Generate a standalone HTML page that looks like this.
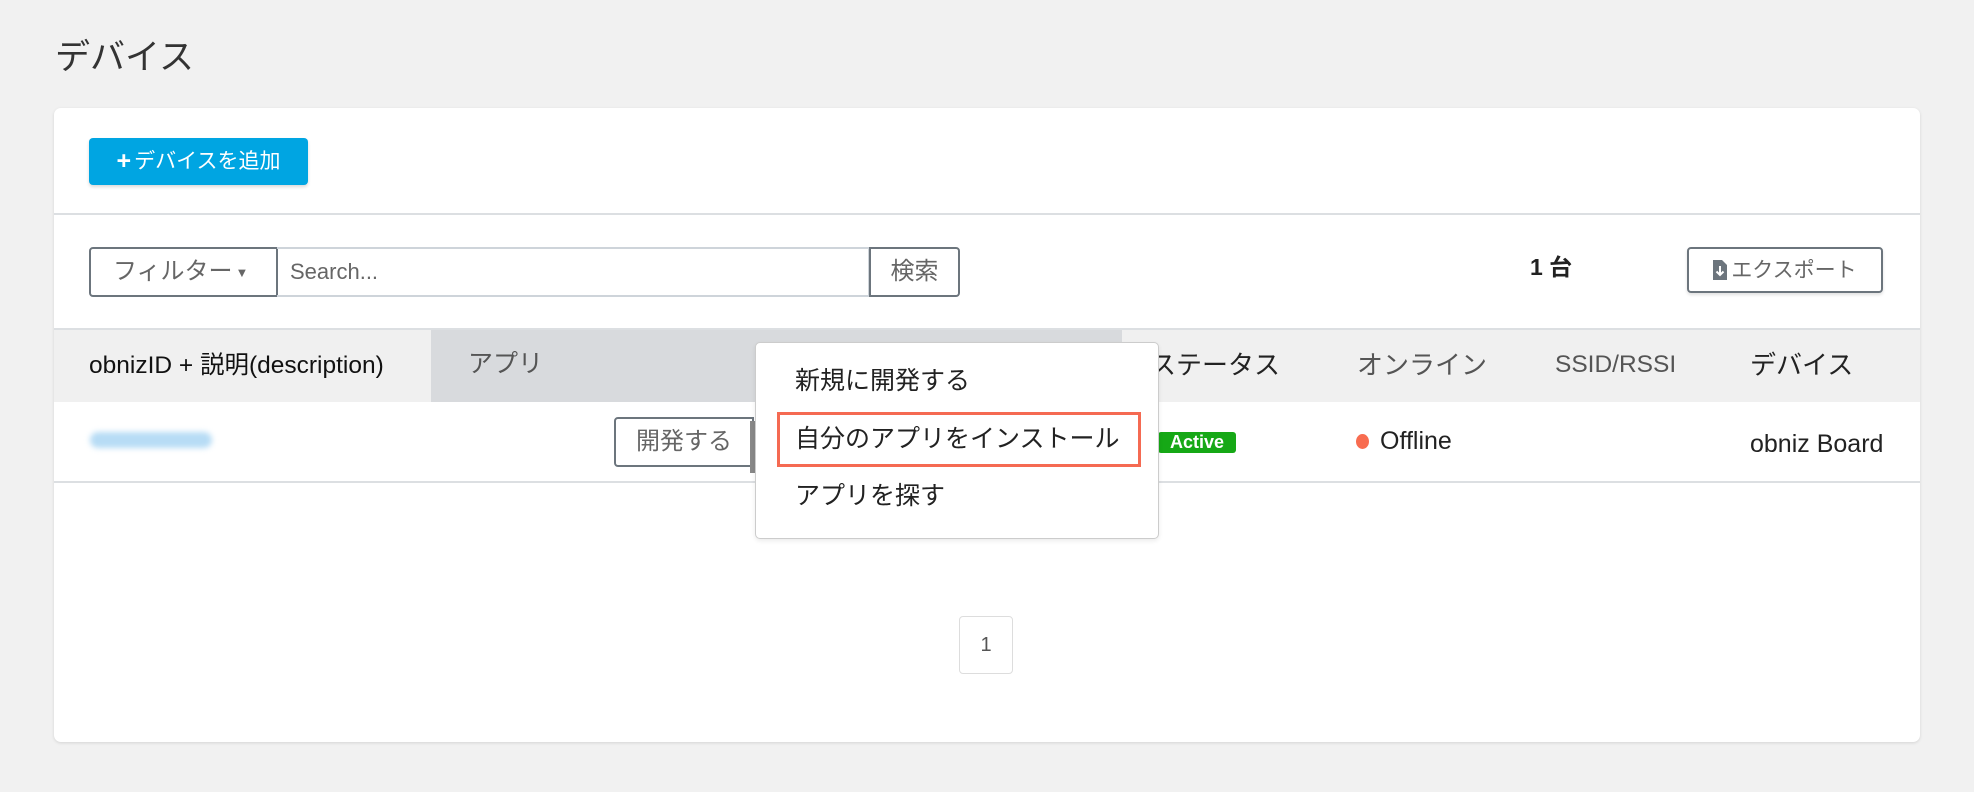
<!DOCTYPE html>
<html><head><meta charset="utf-8"><style>
*{box-sizing:border-box;margin:0;padding:0}
body{width:1974px;height:792px;background:#f1f1f1;font-family:"Liberation Sans","Noto Sans CJK JP",sans-serif;color:#222;position:relative;overflow:hidden}
.a{position:absolute}
.t{white-space:nowrap;line-height:1}
</style></head><body>
<div class="a t" style="left:55px;top:40px;font-size:35px;color:#333">デバイス</div>
<div class="a" style="left:54px;top:108px;width:1866px;height:634px;background:#fff;border-radius:7px;box-shadow:0 1px 3px rgba(0,0,0,.12)"></div>
<div class="a t" style="left:89px;top:138px;width:219px;height:47px;background:#00a5e2;border-radius:4px;color:#fff;font-size:21px;display:flex;align-items:center;justify-content:center;box-shadow:0 2px 3px rgba(0,0,0,.15)"><b style="font-size:25px;margin-right:3px">+</b>デバイスを追加</div>
<div class="a" style="left:54px;top:213px;width:1866px;height:2px;background:#dcdfe2"></div>
<div class="a t" style="left:89px;top:247px;width:189px;height:50px;border:2px solid #6c757d;border-radius:4px 0 0 4px;font-size:24px;color:#666;display:flex;align-items:center;padding-left:22px">フィルター<span style="font-size:13px;margin-left:3px">▼</span></div>
<div class="a t" style="left:277px;top:247px;width:593px;height:50px;border:2px solid #ced4da;border-left:none;font-size:22px;color:#666;display:flex;align-items:center;padding-left:13px">Search...</div>
<div class="a t" style="left:869px;top:247px;width:91px;height:50px;border:2px solid #6c757d;border-radius:0 4px 4px 0;font-size:24px;color:#666;display:flex;align-items:center;justify-content:center">検索</div>
<div class="a t" style="left:1530px;top:256px;font-size:23px;font-weight:bold">1 台</div>
<div class="a t" style="left:1687px;top:247px;width:196px;height:46px;border:2px solid #6c757d;border-radius:4px;font-size:21px;color:#666;display:flex;align-items:center;justify-content:center;box-shadow:0 2px 3px rgba(0,0,0,.12)"><svg width="14" height="20" viewBox="0 0 14 20" style="margin-right:4px"><path d="M0 0h9l5 5v15H0z" fill="#6c757d"/><path d="M7 6v9M3.5 11.5L7 15l3.5-3.5" stroke="#fff" stroke-width="2" fill="none"/></svg>エクスポート</div>
<div class="a" style="left:54px;top:328px;width:1866px;height:2px;background:#dcdfe2"></div>
<div class="a" style="left:54px;top:330px;width:1866px;height:72px;background:#f0f0f0"></div>
<div class="a" style="left:431px;top:330px;width:691px;height:72px;background:#d8dadd"></div>
<div class="a t" style="left:89px;top:354px;font-size:24.5px;color:#111">obnizID + 説明(description)</div>
<div class="a t" style="left:468px;top:352px;font-size:25px;color:#555">アプリ</div>
<div class="a t" style="left:1150px;top:352px;font-size:26px;color:#222">ステータス</div>
<div class="a t" style="left:1357px;top:352px;font-size:26px;color:#555">オンライン</div>
<div class="a t" style="left:1555px;top:353px;font-size:24.5px;color:#555">SSID/RSSI</div>
<div class="a t" style="left:1750px;top:352px;font-size:26px;color:#222">デバイス</div>
<div class="a" style="left:54px;top:481px;width:1866px;height:2px;background:#dcdfe2"></div>
<div class="a" style="left:90px;top:432px;width:122px;height:16px;background:#b7dcf5;border-radius:8px;filter:blur(3px)"></div>
<div class="a t" style="left:614px;top:417px;width:140px;height:50px;border:2px solid #6c757d;border-radius:4px 0 0 4px;font-size:24px;color:#666;display:flex;align-items:center;justify-content:center">開発する</div>
<div class="a" style="left:750px;top:421px;width:6px;height:52px;background:#888"></div>
<div class="a t" style="left:1158px;top:432px;width:78px;height:21px;background:#16a816;border-radius:3px;color:#fff;font-size:18px;font-weight:bold;text-align:center;line-height:21px">Active</div>
<div class="a" style="left:1356px;top:434px;width:13px;height:15px;border-radius:50%;background:#f86c50"></div>
<div class="a t" style="left:1380px;top:429px;font-size:25px;color:#222">Offline</div>
<div class="a t" style="left:1750px;top:432px;font-size:25px;color:#222">obniz Board</div>
<div class="a" style="left:755px;top:342px;width:404px;height:197px;background:#fff;border:1px solid #ccc;border-radius:5px;box-shadow:0 2px 5px rgba(0,0,0,.08)"></div>
<div class="a t" style="left:795px;top:369px;font-size:25px;color:#222">新規に開発する</div>
<div class="a" style="left:777px;top:412px;width:364px;height:55px;border:3px solid #f56a52"></div>
<div class="a t" style="left:795px;top:427px;font-size:25px;color:#222">自分のアプリをインストール</div>
<div class="a t" style="left:795px;top:484px;font-size:25px;color:#222">アプリを探す</div>
<div class="a t" style="left:959px;top:616px;width:54px;height:58px;border:1px solid #ddd;border-radius:4px;font-size:20px;color:#555;display:flex;align-items:center;justify-content:center">1</div>
</body></html>
